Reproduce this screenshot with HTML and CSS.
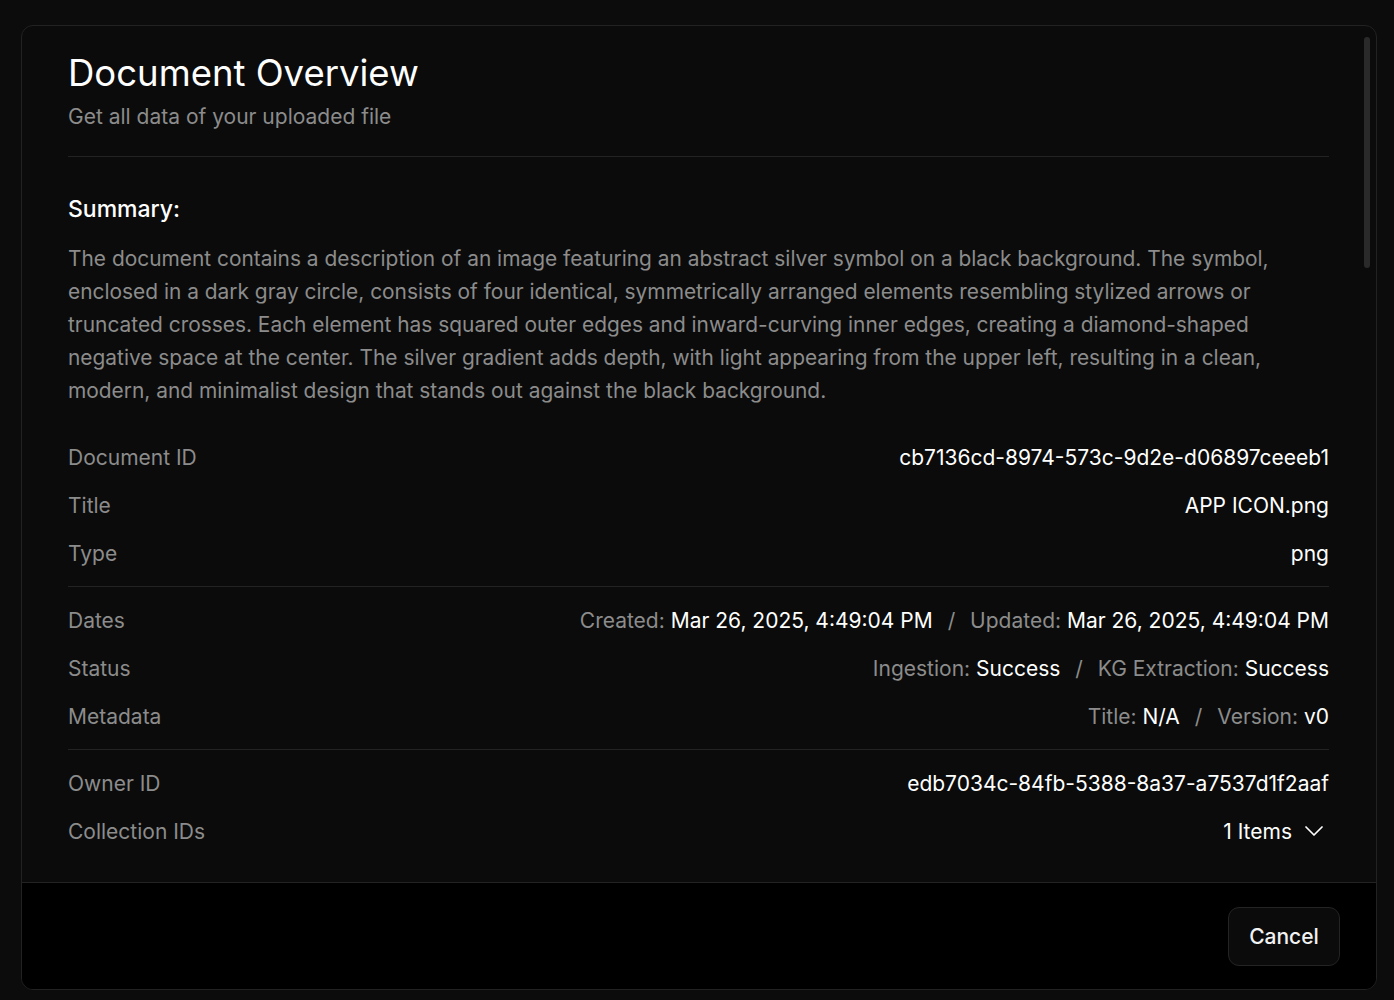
FILE: index.html
```html
<!DOCTYPE html>
<html lang="en">
<head>
  <meta charset="UTF-8" />
  <title>Document Overview</title>
  <link rel="stylesheet" href="styles.css">
</head>
<body>

<div class="dialog">
  <div class="dialog-body">
    <div class="scroll-thumb"></div>

    <div class="dialog-header">
      <h2>Document Overview</h2>
      <p>Get all data of your uploaded file</p>
    </div>

    <div class="summary">
      <h3>Summary:</h3>
      <p>The document contains a description of an image featuring an abstract silver symbol on a black background. The symbol, enclosed in a dark gray circle, consists of four identical, symmetrically arranged elements resembling stylized arrows or truncated crosses. Each element has squared outer edges and inward-curving inner edges, creating a diamond-shaped negative space at the center. The silver gradient adds depth, with light appearing from the upper left, resulting in a clean, modern, and minimalist design that stands out against the black background.</p>
    </div>

    <div class="info-group">
      <div class="info-row"><span class="label">Document ID</span><span class="value">cb7136cd-8974-573c-9d2e-d06897ceeeb1</span></div>
      <div class="info-row"><span class="label">Title</span><span class="value">APP ICON.png</span></div>
      <div class="info-row"><span class="label">Type</span><span class="value">png</span></div>
    </div>

    <div class="info-group">
      <div class="info-row">
        <span class="label">Dates</span>
        <span class="value"><span class="muted">Created:</span> Mar 26, 2025, 4:49:04 PM <span class="sep">/</span> <span class="muted">Updated:</span> Mar 26, 2025, 4:49:04 PM</span>
      </div>
      <div class="info-row">
        <span class="label">Status</span>
        <span class="value"><span class="muted">Ingestion:</span> Success <span class="sep">/</span> <span class="muted">KG Extraction:</span> Success</span>
      </div>
      <div class="info-row">
        <span class="label">Metadata</span>
        <span class="value"><span class="muted">Title:</span> N/A <span class="sep">/</span> <span class="muted">Version:</span> v0</span>
      </div>
    </div>

    <div class="info-group last">
      <div class="info-row"><span class="label">Owner ID</span><span class="value">edb7034c-84fb-5388-8a37-a7537d1f2aaf</span></div>
      <div class="info-row">
        <span class="label">Collection IDs</span>
        <span class="value items">1 Items
          <svg width="18" height="10" viewBox="0 0 18 10" fill="none" stroke="currentColor" stroke-width="1.7" stroke-linecap="round" stroke-linejoin="round"><path d="M1 1l8 8 8-8"/></svg>
        </span>
      </div>
    </div>
  </div>

  <div class="dialog-footer">
    <button class="btn-cancel">Cancel</button>
  </div>
</div>

</body>
</html>
```

FILE: styles.css
```css
body {
  margin: 0;
  background: #0c0c0c;
  font-family: Inter, "Noto Sans", sans-serif;
  color: #f2f2f2;
}

.dialog {
  margin: 25px 0 0 21px;
  width: 1354px;
  height: 963px;
  border: 1px solid #222;
  border-radius: 12px;
  overflow: hidden;
  display: flex;
  flex-direction: column;
  background: #0b0b0b;
}

.dialog-body {
  position: relative;
  flex: 1;
  overflow: hidden;
  padding: 27px 47px 0 46px;
}

.scroll-thumb {
  position: absolute;
  top: 11px;
  right: 6px;
  width: 6px;
  height: 231px;
  border-radius: 3px;
  background: #2a2a2a;
}

.dialog-header {
  padding-bottom: 25px;
  border-bottom: 1px solid #232323;
}

.dialog-header h2 {
  margin: 0;
  font-size: 36.5px;
  line-height: 40px;
  font-weight: 400;
  color: #fff;
}

.dialog-header p {
  margin: 10px 0 0;
  font-size: 21px;
  line-height: 28px;
  color: #8c8c8c;
}

.summary {
  padding-top: 37px;
}

.summary h3 {
  margin: 0;
  font-size: 23px;
  line-height: 30px;
  font-weight: 500;
  color: #fff;
}

.summary p {
  margin: 18px 0 0;
  font-size: 20.9px;
  line-height: 33px;
  color: #8c8c8c;
}

.info-group {
  padding: 9px 0;
  border-bottom: 1px solid #232323;
}

.summary + .info-group {
  padding-top: 26px;
}

.info-group.last {
  border-bottom: none;
}

.info-row {
  display: flex;
  justify-content: space-between;
  align-items: center;
  height: 48px;
  font-size: 21px;
}

.label {
  color: #8c8c8c;
}

.value {
  color: #fff;
}

.muted {
  color: #8c8c8c;
}

.sep {
  color: #8c8c8c;
  margin: 0 9px;
}

.items {
  display: flex;
  align-items: center;
  gap: 13px;
  padding-right: 6px;
}

.dialog-footer {
  height: 106px;
  background: #000;
  border-top: 1px solid #232323;
  display: flex;
  justify-content: flex-end;
  align-items: center;
  padding-right: 36px;
}

.btn-cancel {
  font-family: Inter, "Noto Sans", sans-serif;
  font-size: 21px;
  font-weight: 500;
  color: #f2f2f2;
  background: #0b0b0b;
  border: 1px solid #242424;
  border-radius: 11px;
  width: 112px;
  height: 59px;
  cursor: pointer;
}
```
